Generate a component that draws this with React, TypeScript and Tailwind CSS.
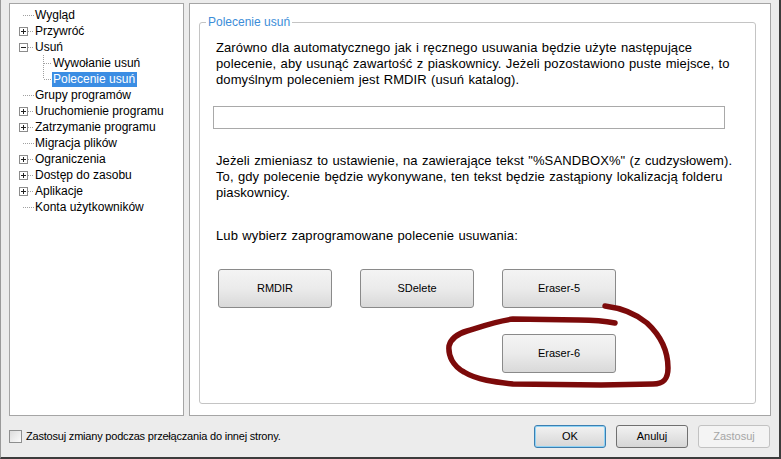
import React from "react";

type TreeItem = {
  label: string;
  level: 0 | 1;
  expander?: "plus" | "minus";
  last?: boolean;
  selected?: boolean;
};

const treeItems: TreeItem[] = [
  { label: "Wygląd", level: 0 },
  { label: "Przywróć", level: 0, expander: "plus" },
  { label: "Usuń", level: 0, expander: "minus" },
  { label: "Wywołanie usuń", level: 1 },
  { label: "Polecenie usuń", level: 1, last: true, selected: true },
  { label: "Grupy programów", level: 0 },
  { label: "Uruchomienie programu", level: 0, expander: "plus" },
  { label: "Zatrzymanie programu", level: 0, expander: "plus" },
  { label: "Migracja plików", level: 0 },
  { label: "Ograniczenia", level: 0, expander: "plus" },
  { label: "Dostęp do zasobu", level: 0, expander: "plus" },
  { label: "Aplikacje", level: 0, expander: "plus" },
  { label: "Konta użytkowników", level: 0 },
];

const Connector = ({ item }: { item: TreeItem }) => {
  const dot = { stroke: "#a0a0a0", strokeWidth: 1, strokeDasharray: "1 1" };
  if (item.level === 1) {
    return (
      <svg width="42" height="16" className="shrink-0">
        <line x1="33.5" y1="0" x2="33.5" y2={item.last ? 8 : 16} {...dot} />
        <line x1="34" y1="8.5" x2="42" y2="8.5" {...dot} />
      </svg>
    );
  }
  return (
    <svg width="24" height="16" className="shrink-0">
      {item.expander ? (
        <>
          <line x1="18" y1="8.5" x2="24" y2="8.5" {...dot} />
          <rect x="9.5" y="4.5" width="8" height="8" fill="#fff" stroke="#8c8c8c" />
          <line x1="11" y1="8.5" x2="16" y2="8.5" stroke="#222" />
          {item.expander === "plus" && (
            <line x1="13.5" y1="6" x2="13.5" y2="11" stroke="#222" />
          )}
        </>
      ) : (
        <line x1="13" y1="8.5" x2="24" y2="8.5" {...dot} />
      )}
    </svg>
  );
};

const Tree = () => (
  <div className="flex h-[413px] w-[175px] flex-col border border-[#a5a5a5] bg-white pt-[3px] text-[12px]">
    {treeItems.map((item) => (
      <div key={item.label} className="flex h-4 items-center">
        <Connector item={item} />
        <span
          className={
            item.selected
              ? "bg-[#3b8de3] pl-[1px] pr-[2px] leading-[15px] text-white"
              : "pl-[1px] pr-[2px] leading-4 text-black"
          }
        >
          {item.label}
        </span>
      </div>
    ))}
  </div>
);

const CommandButton = ({ label }: { label: string }) => (
  <button className="h-[39px] w-[114px] rounded-[3px] border border-[#8a8a8a] bg-gradient-to-b from-[#f4f4f4] via-[#ebebeb] to-[#d9d9d9] text-[11px] text-black">
    {label}
  </button>
);

const DialogButton = ({
  label,
  primary,
  disabled,
}: {
  label: string;
  primary?: boolean;
  disabled?: boolean;
}) => {
  if (disabled) {
    return (
      <button className="h-[23px] w-[72px] rounded-[3px] border border-[#c2c2c2] bg-[#f4f4f4] text-[11px] text-[#a6a6a6]">
        {label}
      </button>
    );
  }
  return (
    <button
      className={
        primary
          ? "h-[23px] w-[72px] rounded-[3px] border border-[#3c7fb1] bg-gradient-to-b from-[#f2f2f2] to-[#d6d6d6] text-[11px] text-black shadow-[inset_0_0_0_1px_#8fd3f5]"
          : "h-[23px] w-[72px] rounded-[3px] border border-[#707070] bg-gradient-to-b from-[#f2f2f2] to-[#d6d6d6] text-[11px] text-black"
      }
    >
      {label}
    </button>
  );
};

const CommandPanel = () => (
  <div className="h-[413px] w-[582px] border border-[#a5a5a5] bg-white pl-[9px] pt-[10px]">
    <fieldset className="h-[390px] w-[557px] rounded-[3px] border border-[#c4c4c4]">
      <legend className="ml-[6px] px-[2px] text-[12px] leading-4 text-[#3c8dd8]">
        Polecenie usuń
      </legend>
      <div className="flex flex-col pl-[13px] pt-[10px] text-black">
        <p className="whitespace-nowrap pl-[3px] leading-4 tracking-[0.1px] [word-spacing:0.6px]">
          Zarówno dla automatycznego jak i ręcznego usuwania będzie użyte następujące
          <br />
          polecenie, aby usunąć zawartość z piaskownicy. Jeżeli pozostawiono puste miejsce, to
          <br />
          domyślnym poleceniem jest RMDIR (usuń katalog).
        </p>
        <input
          type="text"
          className="mt-[18px] h-[23px] w-[512px] border border-[#a9a9a9] bg-white outline-none"
        />
        <p className="mt-[24px] whitespace-nowrap pl-[3px] leading-4 tracking-[0.1px] [word-spacing:0.6px]">
          Jeżeli zmieniasz to ustawienie, na zawierające tekst "%SANDBOX%" (z cudzysłowem).
          <br />
          To, gdy polecenie będzie wykonywane, ten tekst będzie zastąpiony lokalizacją folderu
          <br />
          piaskownicy.
        </p>
        <p className="mt-[27px] whitespace-nowrap pl-[3px] leading-4 tracking-[0.1px] [word-spacing:0.6px]">
          Lub wybierz zaprogramowane polecenie usuwania:
        </p>
        <div className="mt-[25px] flex gap-[28px] pl-[5px]">
          <CommandButton label="RMDIR" />
          <CommandButton label="SDelete" />
          <CommandButton label="Eraser-5" />
        </div>
        <div className="mt-[26px] flex pl-[289px]">
          <CommandButton label="Eraser-6" />
        </div>
      </div>
    </fieldset>
  </div>
);

const Scribble = () => (
  <svg
    width="781"
    height="459"
    className="pointer-events-none absolute left-0 top-0"
    viewBox="0 0 781 459"
  >
    <path
      d="M604 306 C620 308 634 313 646 323 C660 336 667 352 667 368 C667 380 662 384 652 384 L600 385 L512 384 C494 382 476 380 463 372 C452 366 447 356 448 346 C450 338 456 334 466 331 C482 326 496 321 512 319 L578 320 C592 320 604 321 614 323"
      fill="none"
      stroke="#7c0a0a"
      strokeWidth="5.5"
      strokeLinecap="round"
      strokeLinejoin="round"
    />
  </svg>
);

export default function App() {
  return (
    <div className="relative flex h-[459px] w-[781px] flex-col overflow-hidden border-b-2 border-l border-r-2 border-b-[#3c3c3c] border-l-[#9a9a9a] border-r-[#3c3c3c] bg-[#ececec] font-['Liberation_Sans',Arial,sans-serif] text-[13px]">
      <div className="flex gap-[5px] pl-2 pt-[3px]">
        <Tree />
        <CommandPanel />
      </div>
      <div className="flex flex-1 items-center pl-2 pr-[9px]">
        <span className="h-[13px] w-[13px] shrink-0 border border-[#8e8f8f] bg-gradient-to-br from-[#dcdcdc] to-[#fbfbfb]" />
        <span className="ml-[4px] text-[11px] tracking-[-0.2px] text-black">
          Zastosuj zmiany podczas przełączania do innej strony.
        </span>
        <div className="ml-auto flex gap-[10px]">
          <DialogButton label="OK" primary />
          <DialogButton label="Anuluj" />
          <DialogButton label="Zastosuj" disabled />
        </div>
      </div>
      <Scribble />
    </div>
  );
}
